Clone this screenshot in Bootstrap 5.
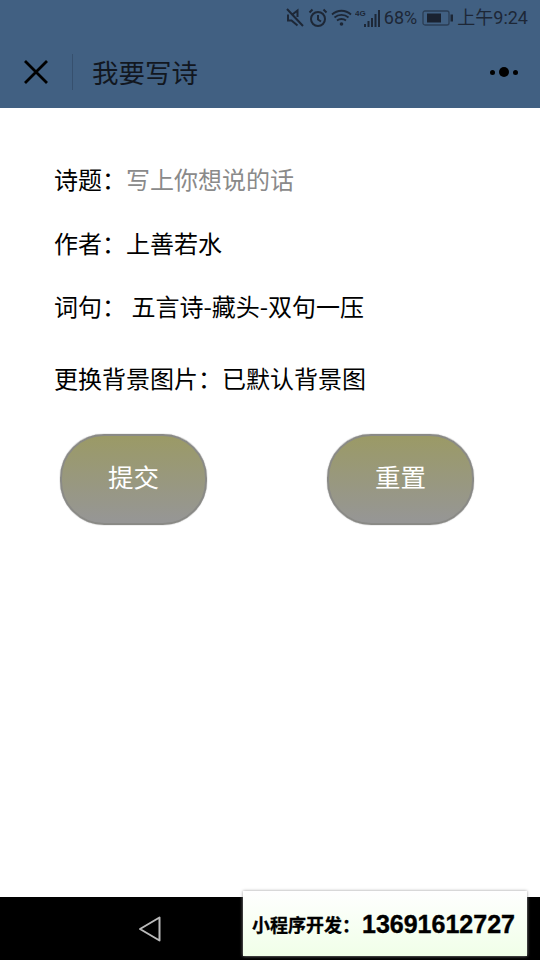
<!DOCTYPE html>
<html lang="zh">
<head>
<meta charset="utf-8">
<title>我要写诗</title>
<link rel="stylesheet" href="https://cdn.jsdelivr.net/npm/bootstrap@5.3.0/dist/css/bootstrap.min.css">
<style>
html,body{height:100%;margin:0;overflow:hidden}
body{font-family:"Noto Sans CJK SC","Roboto",sans-serif;color:#000;background:#fff}
.screen{width:540px;height:960px;position:relative}
.top-area{background:#416082;height:108px;color:#1a2230}
.status-row{height:36px;padding-right:12px;gap:3px;font-size:18px;line-height:36px;color:#1d2736;font-family:"Roboto","Noto Sans CJK SC",sans-serif}
.batt-icon{margin-left:2px}
.title-row{height:72px}
.close-slot{width:73px;padding-left:24px}
.nav-rule{width:1px;height:36px;background:#36506e;margin-top:-1px}
.page-title{font-size:26.5px;padding-left:19px;color:#12171f;line-height:36px}
.dots-slot{margin-right:22px;gap:4px}
.dot-s{width:5px;height:5px;border-radius:50%;background:#000}
.dot-l{width:10px;height:10px;border-radius:50%;background:#000}
.form-area{padding:52px 0 0 54px;height:789px}
.form-line{font-size:24px;line-height:38px;height:38px;color:#000;white-space:nowrap}
.form-line + .form-line{margin-top:25.5px}
.form-line.gap-more{margin-top:34px}
.hint-text{color:#8a8a8a}
.btn-row{margin-top:37px;padding-left:6px;gap:120px}
.poem-btn{width:147px;height:91px;border-radius:44px;border:2px solid #8a8a86;font-size:25.5px;line-height:1.3;color:#fff;background:linear-gradient(#9b9a66,#969696);padding:0 0 8px;box-shadow:0 0 1px #666}
.poem-btn:hover,.poem-btn:active{color:#fff;background:linear-gradient(#9b9a66,#969696);border-color:#8a8a86}
.bottom-bar{height:63px;background:#000}
.back-icon{margin-left:138px;margin-top:18px}
.promo-box{position:absolute;left:243px;top:891px;width:284px;height:65px;background:linear-gradient(#fff,#f0ffe8);box-shadow:0 0 3px #999;font-weight:700;white-space:nowrap;padding-left:9px;padding-top:2px;color:#000}
.promo-label{font-size:18px;-webkit-text-stroke:.3px #000}
.promo-num{font-family:"Liberation Sans",sans-serif;font-size:25px;-webkit-text-stroke:.4px #000;margin-left:2px}
</style>
</head>
<body>
<div class="screen d-flex flex-column">
  <header class="top-area">
    <div class="status-row d-flex justify-content-end align-items-center">
      <svg width="20" height="20" viewBox="0 0 20 20" fill="none" stroke="#1d2736" stroke-width="2"><path d="M2 1l16 17M3 6.500v6h3.500l6 5M12.500 9V2.500L8 6"/></svg>
      <svg width="20" height="20" viewBox="0 0 20 20" fill="none" stroke="#1d2736" stroke-width="2"><circle cx="10" cy="11" r="7"/><path d="M10 7v4.500l3 2M1.500 4.500l3-3M18.500 4.500l-3-3"/></svg>
      <svg width="21" height="20" viewBox="0 0 21 20" fill="none" stroke="#1d2736" stroke-width="1.800"><path d="M1 6.500c5.500-5 13.500-5 19 0M3.500 9.500c4-3.500 10-3.500 14 0M6 12.500c2.500-2 6.500-2 9 0"/><circle cx="10.500" cy="16" r="1.800" fill="#1d2736" stroke="none"/></svg>
      <svg width="26" height="20" viewBox="0 0 26 20" fill="#1d2736"><rect x="9" y="16" width="2" height="3"/><rect x="12.500" y="13" width="2" height="6"/><rect x="16" y="10" width="2" height="9"/><rect x="19.500" y="6" width="2" height="13"/><rect x="23" y="2" width="2" height="17"/><text x="0" y="8" font-size="8" font-weight="700" font-family="Liberation Sans">4G</text></svg>
      <span>68%</span>
      <svg class="batt-icon" width="32" height="18" viewBox="0 0 32 18" fill="none"><rect x="1" y="2" width="26" height="14" rx="2" stroke="#1d2736" stroke-opacity=".6" stroke-width="1.300"/><rect x="5" y="4.500" width="14" height="9" fill="#1a2230"/><rect x="28.500" y="5.500" width="2.500" height="7" fill="#1d2736"/></svg>
      <span>上午9:24</span>
    </div>
    <div class="title-row d-flex align-items-center">
      <div class="close-slot d-flex align-items-center justify-content-between">
        <svg width="24" height="24" viewBox="0 0 24 24" stroke="#000" stroke-width="2.800" fill="none"><path d="M1 1l22 22M23 1L1 23"/></svg>
        <span class="nav-rule"></span>
      </div>
      <div class="page-title flex-grow-1">我要写诗</div>
      <div class="dots-slot d-flex align-items-center"><span class="dot-s"></span><span class="dot-l"></span><span class="dot-s"></span></div>
    </div>
  </header>
  <main class="form-area">
    <div class="form-line">诗题：<span class="hint-text">写上你想说的话</span></div>
    <div class="form-line">作者：上善若水</div>
    <div class="form-line">词句： 五言诗-藏头-双句一压</div>
    <div class="form-line gap-more">更换背景图片：已默认背景图</div>
    <div class="btn-row d-flex">
      <button type="button" class="btn poem-btn">提交</button>
      <button type="button" class="btn poem-btn">重置</button>
    </div>
  </main>
  <footer class="bottom-bar">
    <svg class="back-icon d-block" width="24" height="28" viewBox="0 0 24 28" fill="none" stroke="#bbb" stroke-width="2"><path d="M21.500 2.500v23L2 14z" stroke-linejoin="round"/></svg>
  </footer>
  <div class="promo-box d-flex align-items-center"><span class="promo-label">小程序开发：</span><span class="promo-num">13691612727</span></div>
</div>
<script src="https://cdn.jsdelivr.net/npm/bootstrap@5.3.0/dist/js/bootstrap.bundle.min.js"></script>
</body>
</html>
